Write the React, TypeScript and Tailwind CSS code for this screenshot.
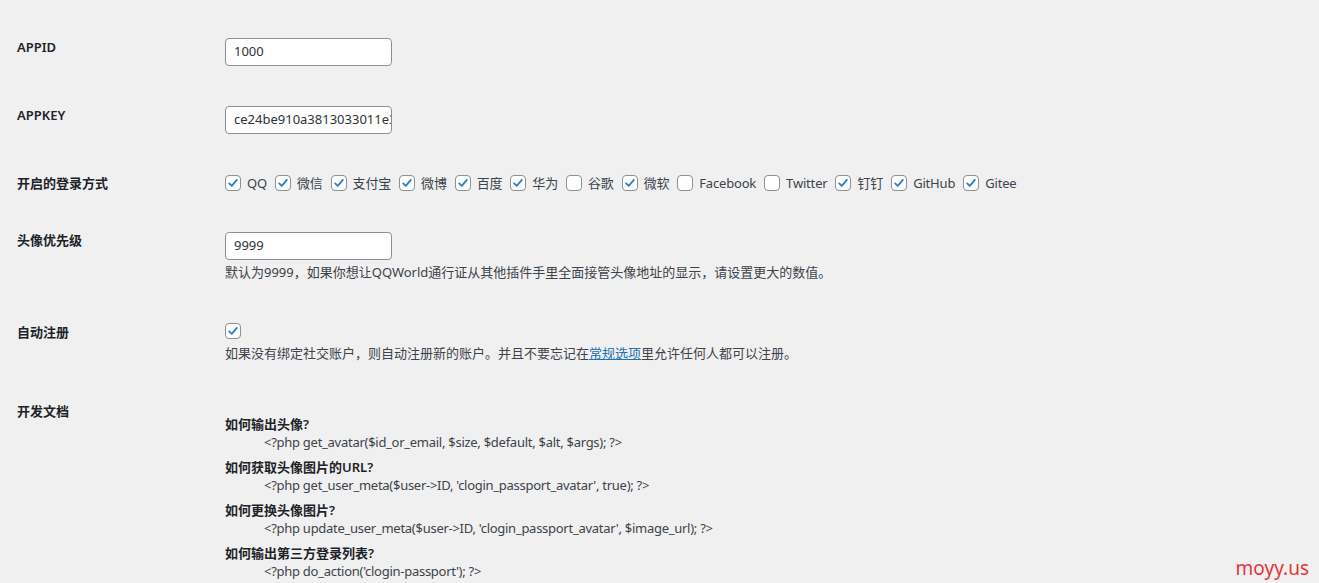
import React from "react";

const font = { fontFamily: '"Noto Sans", "Noto Sans CJK SC", sans-serif' };

function Check({ checked }: { checked: boolean }) {
  return (
    <span className="inline-flex h-[16px] w-[16px] shrink-0 items-center justify-center rounded-[4px] border border-[#8c8f94] bg-white">
      {checked && (
        <svg width="14" height="14" viewBox="0 0 20 20" className="text-[#2f7dc2]">
          <path d="M4.5 10.5 L8.2 14 L15.5 5.5" fill="none" stroke="currentColor" strokeWidth="2.6" strokeLinecap="round" strokeLinejoin="round" />
        </svg>
      )}
    </span>
  );
}

const methods: [string, boolean][] = [
  ["QQ", true],
  ["微信", true],
  ["支付宝", true],
  ["微博", true],
  ["百度", true],
  ["华为", true],
  ["谷歌", false],
  ["微软", true],
  ["Facebook", false],
  ["Twitter", false],
  ["钉钉", true],
  ["GitHub", true],
  ["Gitee", true],
];

const docs: [string, string][] = [
  ["如何输出头像?", "<?php get_avatar($id_or_email, $size, $default, $alt, $args); ?>"],
  ["如何获取头像图片的URL?", "<?php get_user_meta($user->ID, 'clogin_passport_avatar', true); ?>"],
  ["如何更换头像图片?", "<?php update_user_meta($user->ID, 'clogin_passport_avatar', $image_url); ?>"],
  ["如何输出第三方登录列表?", "<?php do_action('clogin-passport'); ?>"],
];

function Label({ children }: { children: React.ReactNode }) {
  return (
    <div className="w-[208px] shrink-0 text-[13px] leading-[18px] font-semibold text-[#1d2327]">{children}</div>
  );
}

function TextInput({ value }: { value: string }) {
  return (
    <div className="flex h-[28px] w-[167px] items-center overflow-hidden whitespace-nowrap rounded-[4px] border border-[#8c8f94] bg-white px-[8px] text-[13px] text-[#2c3338]">
      {value}
    </div>
  );
}

export default function App() {
  return (
    <div className="relative h-[583px] w-[1319px] overflow-hidden bg-[#f0f0f1] text-[#3c434a]" style={font}>
      <div className="flex flex-col pl-[17px] pt-[38px]">
        <div className="flex items-start">
          <Label>APPID</Label>
          <TextInput value="1000" />
        </div>
        <div className="mt-[40px] flex items-start">
          <Label>APPKEY</Label>
          <TextInput value="ce24be910a3813033011e3" />
        </div>
        <div className="mt-[40px] flex items-start">
          <Label>开启的登录方式</Label>
          <div className="flex h-[18px] items-center text-[13px] tracking-[-0.18px] text-[#3c434a]">
            {methods.map(([name, c]) => (
              <span key={name} className="mr-[8px] flex items-center">
                <Check checked={c} />
                <span className="ml-[6px] leading-[18px]">{name}</span>
              </span>
            ))}
          </div>
        </div>
        <div className="mt-[39px] flex items-start">
          <Label>头像优先级</Label>
          <div className="flex flex-col pt-[1px]">
            <TextInput value="9999" />
            <div className="mt-[3px] text-[13px] leading-[18px]">
              默认为9999，如果你想让QQWorld通行证从其他插件手里全面接管头像地址的显示，请设置更大的数值。
            </div>
          </div>
        </div>
        <div className="mt-[42px] flex items-start">
          <Label>自动注册</Label>
          <div className="flex flex-col">
            <Check checked={true} />
            <div className="mt-[5px] text-[13px] leading-[18px]">
              如果没有绑定社交账户，则自动注册新的账户。并且不要忘记在
              <span className="text-[#2271b1] underline">常规选项</span>
              里允许任何人都可以注册。
            </div>
          </div>
        </div>
        <div className="mt-[40px] flex items-start">
          <Label>开发文档</Label>
          <div className="flex flex-col pt-[13px] text-[13px] leading-[18px]">
            {docs.map(([q, code], i) => (
              <div key={q} className={i > 0 ? "mt-[7px]" : ""}>
                <div className="font-semibold text-[#1d2327]">{q}</div>
                <div className="pl-[39px] tracking-[-0.27px] text-[#3c434a]">{code}</div>
              </div>
            ))}
          </div>
        </div>
      </div>
      <div className="absolute right-[10px] top-[555px] text-[19px] leading-[26px] text-[#e0373b]">moyy.us</div>
    </div>
  );
}
